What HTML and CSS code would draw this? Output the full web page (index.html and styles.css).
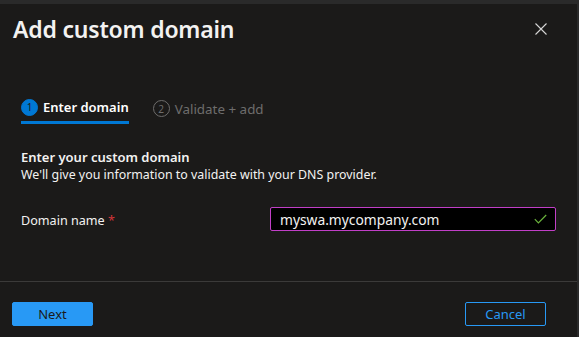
FILE: index.html
```html
<!DOCTYPE html>
<html>
  <head>
    <meta charset="utf-8">
    <title>Add custom domain</title>
    <link rel="stylesheet" href="styles.css">
  </head>
  <body>
    <div class="panel">
      <div class="header">
        <h1 class="title">Add custom domain</h1>
        <button class="close" aria-label="Close">
          <svg width="12" height="12" viewBox="0 0 12 12"><path d="M0.5 0.5 L11.5 11.5 M11.5 0.5 L0.5 11.5" stroke="#d6d6d6" stroke-width="1.1" fill="none"/></svg>
        </button>
      </div>

      <div class="steps">
        <div class="step active">
          <span class="num">1</span>
          <span class="label">Enter domain</span>
        </div>
        <div class="step">
          <span class="num">2</span>
          <span class="label">Validate + add</span>
        </div>
      </div>

      <div class="content">
        <h2 class="section">Enter your custom domain</h2>
        <p class="desc">We'll give you information to validate with your DNS provider.</p>

        <div class="field">
          <label class="field-label">Domain name <span class="req">*</span></label>
          <div class="input">
            <span class="value">myswa.mycompany.com</span>
            <svg width="13" height="10" viewBox="0 0 13 10"><path d="M0.8 5.2 L4.4 8.8 L12.2 1" stroke="#6bb33d" stroke-width="1.2" fill="none"/></svg>
          </div>
        </div>
      </div>

      <div class="footer">
        <button class="btn primary">Next</button>
        <button class="btn outline">Cancel</button>
      </div>
    </div>
  </body>
</html>
```

FILE: styles.css
```css
* {
  margin: 0;
  padding: 0;
  box-sizing: border-box;
}
body {
  background: #2a2a2a;
  font-family: "Noto Sans", "Open Sans", sans-serif;
  color: #f3f2f1;
  width: 579px;
  height: 337px;
  overflow: hidden;
}
.panel {
  margin-top: 4px;
  width: 577px;
  height: 333px;
  background: #1b1a19;
  display: flex;
  flex-direction: column;
}
.header {
  display: flex;
  justify-content: space-between;
  align-items: center;
  padding: 8px 30px 0 13px;
  height: 42px;
}
.title {
  font-size: 23px;
  font-weight: 600;
  letter-spacing: -0.2px;
}
.close {
  background: none;
  border: none;
  display: flex;
  margin-top: -1px;
}
.steps {
  display: flex;
  gap: 24px;
  padding: 50px 0 0 21px;
}
.step {
  display: flex;
  align-items: center;
  gap: 5px;
  height: 28px;
  padding-bottom: 3px;
  color: #6e6d6c;
  font-size: 13.4px;
}
.step.active {
  color: #ffffff;
  font-weight: 600;
  font-size: 13px;
  border-bottom: 3px solid #0078d4;
}
.num {
  width: 17px;
  height: 17px;
  border-radius: 50%;
  border: 1px solid #6e6d6c;
  font-size: 10px;
  font-weight: 400;
  display: flex;
  align-items: center;
  justify-content: center;
}
.step.active .num {
  background: #0078d4;
  border-color: #0078d4;
  color: #1b1a19;
}
.content {
  padding: 24px 21px 0 21px;
  flex: 1;
}
.section {
  font-size: 13px;
  font-weight: 600;
  line-height: 18px;
}
.desc {
  font-size: 12.4px;
  line-height: 18px;
}
.field {
  display: flex;
  align-items: center;
  margin-top: 25px;
}
.field-label {
  width: 250px;
  font-size: 12.6px;
}
.req {
  color: #d13438;
}
.input {
  width: 287px;
  height: 24px;
  margin-top: -2px;
  background: #000;
  border: 1px solid #c13fc7;
  border-radius: 2px;
  display: flex;
  align-items: center;
  justify-content: space-between;
  padding: 0 8px 0 9px;
  font-size: 13.8px;
}
.footer {
  border-top: 1px solid #3b3a39;
  height: 56px;
  display: flex;
  justify-content: space-between;
  align-items: center;
  padding: 8px 31px 0 12px;
}
.btn {
  width: 81px;
  height: 24px;
  border-radius: 2px;
  font-family: "Noto Sans", "Open Sans", sans-serif;
  font-size: 13px;
}
.primary {
  background: #2899f5;
  border: 1px solid #2899f5;
  color: #1b1a19;
}
.outline {
  background: none;
  border: 1px solid #2899f5;
  color: #2899f5;
}
```
